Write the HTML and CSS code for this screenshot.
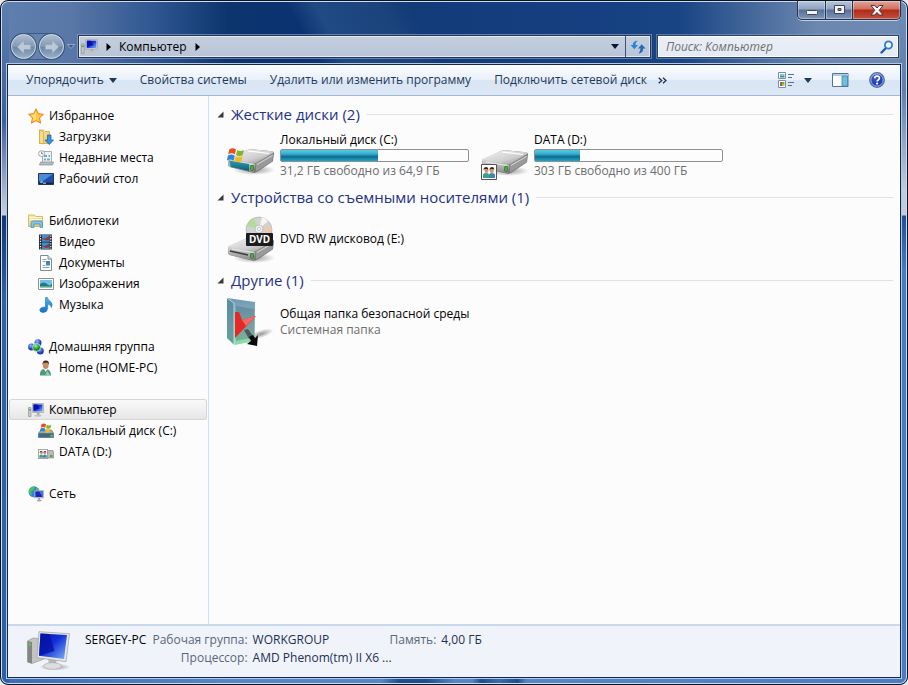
FILE: index.html
```html
<!DOCTYPE html>
<html lang="ru">
<head>
<meta charset="utf-8">
<title>Компьютер</title>
<link rel="stylesheet" href="styles.css">
</head>
<body>
<svg class="defs" aria-hidden="true">
  <defs>
    <linearGradient id="screen" x1="0" y1="0" x2="1" y2="1"><stop offset="0" stop-color="#0717b8"/><stop offset=".45" stop-color="#1230d8"/><stop offset="1" stop-color="#7fb4f4"/></linearGradient>
    <linearGradient id="metal" x1="0" y1="0" x2="1" y2="1"><stop offset="0" stop-color="#f4f4f4"/><stop offset=".6" stop-color="#cfcfcf"/><stop offset="1" stop-color="#8c8c8c"/></linearGradient>
    <linearGradient id="front" x1="0" y1="0" x2="0" y2="1"><stop offset="0" stop-color="#d8d8d8"/><stop offset="1" stop-color="#8a8a8a"/></linearGradient>
    <linearGradient id="teal" x1="0" y1="0" x2="0" y2="1"><stop offset="0" stop-color="#2aa0b4"/><stop offset="1" stop-color="#0e5a74"/></linearGradient>
    <linearGradient id="folder" x1="0" y1="0" x2="1" y2="1"><stop offset="0" stop-color="#fdf0b8"/><stop offset="1" stop-color="#e2bf55"/></linearGradient>
    <linearGradient id="note" x1="0" y1="0" x2="0" y2="1"><stop offset="0" stop-color="#4fb4ee"/><stop offset="1" stop-color="#1270c4"/></linearGradient>
    <linearGradient id="glassfolder" x1="0" y1="0" x2="0" y2="1"><stop offset="0" stop-color="#5f8fb0"/><stop offset=".6" stop-color="#8fb4b8"/><stop offset="1" stop-color="#7fdc9c"/></linearGradient>
    <radialGradient id="blueball" cx=".4" cy=".3"><stop offset="0" stop-color="#9fb6ff"/><stop offset="1" stop-color="#1b3bbd"/></radialGradient>
    <radialGradient id="greenball" cx=".4" cy=".3"><stop offset="0" stop-color="#9fef9f"/><stop offset="1" stop-color="#0f8a1f"/></radialGradient>
    <radialGradient id="shade"><stop offset="0" stop-color="#000" stop-opacity=".4"/><stop offset="1" stop-color="#000" stop-opacity="0"/></radialGradient>
    <symbol id="flag" viewBox="0 0 16 16">
      <path d="M2 3q3-2 6 0L7 7.500q-3-2-6 0z" fill="#e8501c"/><path d="M9 3.500q3 2 6 0L14 8q-3 2-6 0z" fill="#7cb82a"/>
      <path d="M.8 8.600q3-2 6 0L5.800 13q-3-2-6 0z" fill="#2a86dc"/><path d="M7.800 9q3 2 6 0l-1 4.500q-3 2-6 0z" fill="#f8b818"/>
    </symbol>
    <symbol id="pc" viewBox="0 0 16 16">
      <path d="M.5 5.500h2.500v9H.5z" fill="#c9c9c9" stroke="#8a8a8a" stroke-width=".6"/><path d="M.8 7h1.800v1.500H.8z" fill="#3cb62c"/>
      <path d="M4.500 1.500h11v9h-11z" fill="#dadada" stroke="#999" stroke-width=".6"/><path d="M5.500 2.500h9v7h-9z" fill="url(#screen)"/><path d="M5.500 2.500h4l2 4-6 2z" fill="#0612b0"/>
      <path d="M9 10.500h2.500v2.500H9z" fill="#aaa"/><ellipse cx="10" cy="13.600" rx="3.600" ry="1.200" fill="#c4c4c4"/>
    </symbol>
    <symbol id="drive" viewBox="0 0 48 30">
      <ellipse cx="27" cy="24" rx="21" ry="5" fill="url(#shade)"/>
      <path d="M1 13 20 4q2-1 5-.8l20 2q2 .3 2 2l-1 8L30 26q-2 1-4 .7L3 21q-2-.5-2-3z" fill="#777"/>
      <path d="M1 12 20 4q2-1 5-.8l20 2q2 .3 1 1.800L30 16.500q-1.500 1-4 .5L2 14z" fill="url(#metal)"/>
      <path d="M1 12.500 27 17.200q1 .2 1 1.500l-1 6q-.3 1.800-2 1.400L4 21.500Q1.400 21 1.300 18z" fill="url(#front)"/>
      <path d="M28.500 17.500 46.300 7.500 45.500 15 29 25.500z" fill="#999"/><path d="M30 18.500 45.500 9.500" stroke="#d8d8d8"/>
      <path d="M5 15 26 18.500" stroke="#f2f2f2" stroke-width=".8"/><rect x="23.500" y="19" width="3" height="5.500" rx="1" fill="#17420f"/><path d="M25 19.500v4.500" stroke="#43f03a" stroke-width="1.400"/>
      <path d="M21 5 42 7.500" stroke="#fff" stroke-width="1.200"/>
    </symbol>
    <symbol id="people" viewBox="0 0 16 16">
      <path d="M.5.500h15v15H.5z" fill="#fcfcfc" stroke="#555"/>
      <path d="M2 14v-3q0-2 3-2t3 2v3z" fill="#3f9f84"/><path d="M8 14v-3q0-2 3-2t3 2v3z" fill="#3f86b8"/><ellipse cx="5.500" cy="6.500" rx="2" ry="2.600" fill="#d09a70"/><ellipse cx="10.800" cy="6.500" rx="2" ry="2.600" fill="#d09a70"/><path d="M2.500 6q0-3 2.800-3 2.200.2 2 2.500-2-1-3.300-.4zM8.500 6q0-3 2.800-3 2.200.2 2 2.500-2-1-3.300-.4z" fill="#3c2418"/>
    </symbol>
  </defs>
</svg>

<div class="window">
  <header class="titlebar">
    <div class="caption">
      <button class="cap min" aria-label="Свернуть"><svg width="14" height="8"><rect x="1.500" y="2.500" width="11" height="4" rx="1" fill="#f4f4f4" stroke="#3c4658"/></svg></button>
      <button class="cap max" aria-label="Развернуть"><svg width="13" height="10"><path d="M1.500.500h10v8h-10zM5 3.500h3v2H5z" fill="#f4f4f4" fill-rule="evenodd" stroke="#3c4658"/></svg></button>
      <button class="cap close" aria-label="Закрыть"><svg width="14" height="11"><path d="M1 .500h3.800L7 3l2.200-2.500H13L9.200 5.300 13 10H9.200L7 7.500 4.800 10H1l3.800-4.700z" fill="#f6f6f6" stroke="#54303a"/></svg></button>
    </div>
    <div class="navrow">
      <div class="history">
        <button class="round" aria-label="Назад"><svg width="18" height="18" viewBox="0 0 16 16"><path d="M8 2 2 8l6 6v-3.800h6V5.800H8z" fill="#bccad8" stroke="#8fa2b8" stroke-width=".6"/></svg></button>
        <button class="round" aria-label="Вперед"><svg width="18" height="18" viewBox="0 0 16 16"><path d="m8 2 6 6-6 6v-3.800H2V5.800h6z" fill="#bccad8" stroke="#8fa2b8" stroke-width=".6"/></svg></button>
      </div>
      <button class="recent" aria-label="Последние страницы"><svg width="8" height="5"><path d="M.5.500h7L4 4.500z" fill="#3c5a8c" stroke="#a4b8d4" stroke-width=".8"/></svg></button>
      <div class="address">
        <svg class="pcicon" width="17" height="17"><use href="#pc"/></svg>
        <svg class="tri" width="5" height="8"><path d="M.5 0v8L5 4z"/></svg>
        <a class="crumb" href="#">Компьютер</a>
        <svg class="tri" width="5" height="8"><path d="M.5 0v8L5 4z"/></svg>
        <button class="drop" aria-label="Предыдущие расположения"><svg width="8" height="5"><path d="M0 0h8L4 5z" fill="#0a1434"/></svg></button>
        <button class="refresh" aria-label="Обновить"><svg width="16" height="14"><path d="M7.500.500Q2.800 1 2.800 5H.5l3.800 4.200L8 5H5.500Q5.500 2.500 7.500.500z" fill="#2a86d8"/><path d="M8.500 13.500q4.700-.5 4.700-5h2.300L11.700 4.300 8 8.500h2.500q0 3-2 5z" fill="#2868b8"/></svg></button>
      </div>
      <label class="search">
        <input type="search" aria-label="Поиск" placeholder="Поиск: Компьютер">
        <svg width="14" height="14"><path d="M6 8 1.500 12.500" stroke="#1f5aa4" stroke-width="2.400" stroke-linecap="round"/><circle cx="8.500" cy="5" r="3.600" fill="#eef6fc" stroke="#2f7bc4" stroke-width="1.800"/></svg>
      </label>
    </div>
  </header>

  <div class="client">
    <div class="toolbar">
      <button class="cmd">Упорядочить <svg width="8" height="5"><path d="M0 0h8L4 5z" fill="#1e395b"/></svg></button>
      <button class="cmd">Свойства системы</button>
      <button class="cmd">Удалить или изменить программу</button>
      <button class="cmd">Подключить сетевой диск</button>
      <button class="more" aria-label="Дополнительно"><svg width="9" height="7"><path d="m.7.700 3 2.800-3 2.800M5 .700l3 2.800-3 2.800" fill="none" stroke="#1e2f52" stroke-width="1.300"/></svg></button>
      <div class="tools">
        <button class="tool view" aria-label="Изменить представление"><svg width="17" height="16"><path d="M.5.500h7v6h-7zM.5 8.500h7v7h-7z" fill="#fff" stroke="#7c8ca4"/><path d="M2 2h4.500v2H2z" fill="#7fc0ea"/><path d="M2 4h4.500v1.500H2z" fill="#2b9a70"/><path d="M2 10h2v2H2z" fill="#e44a24"/><path d="M4 10h2.500v2H4z" fill="#65b52b"/><path d="M2 12h2v2H2z" fill="#2e77d0"/><path d="M4 12h2.500v2H4z" fill="#f0b020"/><path d="M10 2.500h6M10 5.500h4M10 10.500h6M10 13.500h4" stroke="#5b6f90"/></svg><svg width="8" height="5"><path d="M0 0h8L4 5z" fill="#1e395b"/></svg></button>
        <button class="tool" aria-label="Область просмотра"><svg width="17" height="14"><path d="M.5.500h15.500v13H.5z" fill="#fff" stroke="#52749a"/><path d="M1 1h15v2H1z" fill="#b4cadd"/><path d="M10 3h5.500v10H10z" fill="#6cc0dc" stroke="#3f86a8" stroke-width=".8"/></svg></button>
        <button class="tool help" aria-label="Справка"><svg width="16" height="16"><circle cx="8" cy="8" r="7.300" fill="url(#blueball)" stroke="#566a94" stroke-width="1.200"/><circle cx="8" cy="8" r="6.200" fill="#1d42b4" fill-opacity=".75" stroke="#cdd8ee" stroke-width=".8"/><path d="M5.600 6.400Q5.700 4 8.100 4q2.300.1 2.300 2 0 1.200-1.200 1.900-1 .6-1 1.500" fill="none" stroke="#fff" stroke-width="1.700"/><circle cx="8.100" cy="11.600" r="1.100" fill="#fff"/></svg></button>
      </div>
    </div>

    <div class="body">
      <nav class="sidebar">
        <ul>
          <li><a href="#"><svg viewBox="0 0 16 16"><path d="m8 .800 2.200 4.900 5.200.6-3.900 3.600 1.100 5.300L8 12.600l-4.600 2.600 1.100-5.300L.6 6.300l5.200-.6z" fill="#ffc83c" stroke="#ee7c18"/><path d="M8 3v8.500L4.500 13l1-3.800L3 7l3.500-.5z" fill="#fff0a0" opacity=".6"/></svg>Избранное</a></li>
          <li class="sub"><a href="#"><svg viewBox="0 0 16 16"><path d="M1.500 1h4L7 2.500h4.500v12h-10z" fill="url(#folder)" stroke="#c89f3c" stroke-width=".7"/><path d="m1.500 1 4 2v12l-4-1z" fill="#f9dd86" stroke="#c89f3c" stroke-width=".6"/><path d="M9.500 6h3.500v5h2.500l-4.200 4.600L7 11h2.500z" fill="#2f95e4" stroke="#145ca8" stroke-width=".7"/></svg>Загрузки</a></li>
          <li class="sub"><a href="#"><svg viewBox="0 0 16 16"><path d="M4.500 1.500h9v11h-9z" fill="#eef3f6" stroke="#8d9aa2" stroke-width=".8"/><path d="M6 5h3v2H6zM10.500 5H12v2h-1.500zM6 8.500h2v2H6zM9 8.500h3v2H9z" fill="#74a9c8"/><path d="M2.500 12h13l-1 3H1.500z" fill="#b8bcc0" stroke="#7c8288" stroke-width=".6"/><circle cx="3.600" cy="3.600" r="3" fill="#fafafa" stroke="#8b939a" stroke-width=".8"/><path d="M3.600 1.800v2h1.600" fill="none" stroke="#555" stroke-width=".7"/></svg>Недавние места</a></li>
          <li class="sub"><a href="#"><svg viewBox="0 0 16 16"><path d="M.5 2.500h15v11H.5z" fill="#1c4fae" stroke="#27364e"/><path d="M1 3h14L5 10H1z" fill="#4c8ad8"/><path d="M1 11.500h14V13H1z" fill="#17263e"/><circle cx="3.500" cy="11" r="1.300" fill="#49d0d8"/><path d="M5 12.200h3" stroke="#fff" stroke-width=".8"/></svg>Рабочий стол</a></li>
        </ul>
        <ul>
          <li><a href="#"><svg viewBox="0 0 16 16"><path d="M.5 2h6l1.500 1.500h6.500v10H.5z" fill="url(#folder)" stroke="#cba548" stroke-width=".7"/><path d="M2 4.500h12M2 6.500h12" stroke="#fff7d0"/><path d="M3 14.500V10q0-2 2-2h7.500q2 0 2 2v4.500H12V11H6v3.500z" fill="#7ec4ea" stroke="#3e8cc0" stroke-width=".7"/></svg>Библиотеки</a></li>
          <li class="sub"><a href="#"><svg viewBox="0 0 16 16"><path d="M1 .500h13v15H1z" fill="#22262c"/><path d="M4 1h7.500v6.700H4zM4 8.500h7.500V15H4z" fill="#3d8fd4"/><path d="M11.500 2v3.500L8 6.500 4 4.800V4l3 .5zM11.500 9.500V13L8 14l-4-1.700v-.8l3 .5z" fill="#8d3a2c"/><path d="M2.500 1.500v14M12.800 1.500v14" stroke="#f2f2f2" stroke-width="1.300" stroke-dasharray="1.300 1.300"/></svg>Видео</a></li>
          <li class="sub"><a href="#"><svg viewBox="0 0 16 16"><path d="M2.500.500H10l3.500 3.500v11.500h-11z" fill="#fdfdfd" stroke="#848c96"/><path d="M10 .500v3.500h3.500" fill="#dbe2ea" stroke="#848c96"/><path d="M4.500 4.500h4M4.500 6.500h3M4.500 12.500h7M4.500 10.500h3" stroke="#8fa0b2"/><path d="M8 6h4v4.500H8z" fill="#3f84c4"/></svg>Документы</a></li>
          <li class="sub"><a href="#"><svg viewBox="0 0 16 16"><path d="M.5 2.500h15v11H.5z" fill="#fff" stroke="#8a9298"/><path d="M2 4h12v8H2z" fill="#70c0e8"/><path d="M2 8q4-3 7 0t5-.5V12H2z" fill="#1f7884"/><path d="M2 10.500h12V12H2z" fill="#8cd0a8"/></svg>Изображения</a></li>
          <li class="sub"><a href="#"><svg viewBox="0 0 16 16"><path d="M7.500.500h1.800q.5 2.200 3.200 4 2.700 2.200 1 6Q13 7.800 9.600 7v4.500Q9.300 15.300 5 15.500 1.500 15.300 1.800 12.500 2.800 9.500 7.500 10z" fill="url(#note)" stroke="#1a78c8" stroke-width=".6"/></svg>Музыка</a></li>
        </ul>
        <ul>
          <li><a href="#"><svg viewBox="0 0 16 16"><circle cx="10" cy="3.800" r="3.500" fill="url(#blueball)"/><circle cx="3.500" cy="8" r="3.400" fill="url(#blueball)"/><circle cx="12.300" cy="12" r="3.500" fill="url(#blueball)"/><circle cx="8.500" cy="8.400" r="4" fill="url(#greenball)" stroke="#e4f4ff" stroke-width=".7"/></svg>Домашняя группа</a></li>
          <li class="sub"><a href="#"><svg viewBox="0 0 16 16"><path d="M2 15.500q-.5-6 4-6.500h2.500q4.500.8 4.500 6.500z" fill="#4f9a7c"/><path d="m6 9 1.700 3L9.500 9z" fill="#fff"/><path d="M9.500 11 12 15.500H7z" fill="#8fd0b8"/><ellipse cx="7.700" cy="5" rx="2.900" ry="3.900" fill="#c98c62"/><path d="M4.500 5Q4 .500 7.800.400 11.600.500 11 5q-.4-2-2-2.400-2.500.6-3.500-.1Q5 3.500 4.500 5z" fill="#3a2a22"/></svg>Home (HOME-PC)</a></li>
        </ul>
        <ul>
          <li class="selected"><a href="#"><svg viewBox="0 0 16 16"><use href="#pc"/></svg>Компьютер</a></li>
          <li class="sub"><a href="#"><svg viewBox="0 0 16 16"><path d="M.5 10 3 7h10.500l2 3v4.500H.5z" fill="#9fa8ac" stroke="#687074" stroke-width=".6"/><path d="M.5 10.200h15v4.300H.5z" fill="#3f6c84"/><path d="M12.500 12h2v1.500h-2z" fill="#46f03c"/><use href="#flag" x="2" y="-1" width="12" height="12"/></svg>Локальный диск (C:)</a></li>
          <li class="sub"><a href="#"><svg viewBox="0 0 16 16"><path d="M6 6.500h9l.7 3v4.500H6z" fill="#b9b9b9" stroke="#777" stroke-width=".6"/><path d="M12 11h2.500v2H12z" fill="#3fae35"/><use href="#people" x="0" y="5" width="10" height="10"/></svg>DATA (D:)</a></li>
        </ul>
        <ul>
          <li><a href="#"><svg viewBox="0 0 16 16"><circle cx="6" cy="5.800" r="5.500" fill="#2d86dc"/><path d="M1.500 3Q4 0 7 1L5.500 4 3 5.500l1 3L2.500 9Q0 6 1.500 3zM8 2l2.500.5L11 5H8z" fill="#48c84a"/><path d="M6.500 4.500h9v7.500h-9z" fill="#ccc" stroke="#909090" stroke-width=".5"/><path d="M7.300 5.300h7.400V11H7.300z" fill="#1428c4"/><path d="M11 5.300h3.700V11z" fill="#4a78e8"/><path d="M10.300 12h1.600v2h-1.600z" fill="#999"/><ellipse cx="11.200" cy="14.600" rx="2.600" ry="1" fill="#aaa"/></svg>Сеть</a></li>
        </ul>
      </nav>

      <main class="content">
        <section>
          <h2><svg width="7" height="7"><path d="M6.500.500v6h-6z" fill="#3a3a3a"/></svg><span>Жесткие диски (2)</span></h2>
          <div class="tiles">
            <div class="tile">
              <svg class="big" viewBox="0 0 48 48"><use href="#drive" x="0" y="14" width="48" height="30"/><path d="m2 28.500 20 3.500v7L4 35z" fill="url(#teal)"/><use href="#flag" x="0" y="14" width="18" height="18"/></svg>
              <div class="info"><span class="name">Локальный диск (C:)</span><div class="meter" role="img" aria-label="Занято 52%"><i style="width:52%"></i></div><span class="note">31,2 ГБ свободно из 64,9 ГБ</span></div>
            </div>
            <div class="tile">
              <svg class="big" viewBox="0 0 48 48"><use href="#drive" x="0" y="15" width="48" height="30"/><use href="#people" x="0" y="32" width="16" height="16"/></svg>
              <div class="info"><span class="name">DATA (D:)</span><div class="meter" role="img" aria-label="Занято 24%"><i style="width:24%"></i></div><span class="note">303 ГБ свободно из 400 ГБ</span></div>
            </div>
          </div>
        </section>
        <section>
          <h2><svg width="7" height="7"><path d="M6.500.500v6h-6z" fill="#3a3a3a"/></svg><span>Устройства со съемными носителями (1)</span></h2>
          <div class="tiles">
            <div class="tile">
              <svg class="big" viewBox="0 0 48 48"><use href="#drive" x="0" y="19" width="48" height="30"/><path d="m3 36 18 4" stroke="#3c3c3c" stroke-width="1.600"/><circle cx="32" cy="15" r="13" fill="#d2d2d2" stroke="#aaa" stroke-width=".6"/><path d="m32 14-12.500-3Q21 5 26 3z" fill="#a4e088" opacity=".7"/><path d="m32 14 12 4q1-4 .5-7z" fill="#f4c8a0" opacity=".8"/><path d="m32 14 3-12q4 1 6 4z" fill="#f4f4f4"/><circle cx="32" cy="14" r="4" fill="#efefef" stroke="#a8a8a8" stroke-width=".6"/><circle cx="32" cy="14" r="1.600" fill="#fff" stroke="#999" stroke-width=".5"/><rect x="19" y="18" width="27" height="13" rx="1" fill="#1c1c1c"/><text x="32.500" y="28" class="dvd">DVD</text></svg>
              <div class="info"><span class="name">DVD RW дисковод (E:)</span></div>
            </div>
          </div>
        </section>
        <section>
          <h2><svg width="7" height="7"><path d="M6.500.500v6h-6z" fill="#3a3a3a"/></svg><span>Другие (1)</span></h2>
          <div class="tiles">
            <div class="tile">
              <svg class="big" viewBox="0 0 48 48"><ellipse cx="34" cy="36" rx="13" ry="4" fill="url(#shade)" transform="rotate(-18 34 36)"/><path d="M0 0 28 4v39L8 47 0 40z" fill="url(#glassfolder)" opacity=".9"/><path d="m0 0 7 5v42l-7-7z" fill="#4c8494" opacity=".65"/><path d="m0 0 7 5v42" fill="none" stroke="#c8e8ec" stroke-width=".8"/><path d="m9 8 18 3v28L9 43z" fill="#365c68" opacity=".3"/><path d="M8 14h4l3 8 14-4L8 40z" fill="#e52a26"/><path d="m15 22 14-4-10 10z" fill="#f46a60"/><path d="m17 32 4-1 5 7-4 3z" fill="#4d5a5c"/><path d="m22 39 4-2 2 3 3-3-1 11-10-2 4-3z" fill="#080808"/></svg>
              <div class="info"><span class="name">Общая папка безопасной среды</span><span class="note">Системная папка</span></div>
            </div>
          </div>
        </section>
      </main>
    </div>

    <footer class="details">
      <svg class="host" viewBox="0 0 44 40"><ellipse cx="28" cy="36" rx="16" ry="3.500" fill="url(#shade)"/><path d="M.5 10 6 7l11 1v20L5 32.500.5 31z" fill="#c4c4c4" stroke="#8c8c8c" stroke-width=".6"/><path d="M.5 10 5 11v21.500L.5 31z" fill="#858585"/><path d="M1.500 12h2v3h-2z" fill="#45d235"/><path d="m21 27 8 1 1 6h-8z" fill="#b9b9b9"/><ellipse cx="25.500" cy="35" rx="9" ry="3.300" fill="#dedede" stroke="#a4a4a4" stroke-width=".6"/><path d="m12 .700 30.500 2-3.500 28-29-4z" fill="#e6e6e6" stroke="#9f9f9f" stroke-width=".7"/><path d="m13.500 2.500 26.500 1.600-3 24-25-3.400z" fill="url(#screen)"/><path d="m13.500 2.500 9 .5 5 17-15.500 4.700z" fill="#0510a0" opacity=".75"/></svg>
      <strong class="hostname">SERGEY-PC</strong>
      <dl class="facts">
        <dt>Рабочая группа:</dt><dd>WORKGROUP</dd><dt>Память:</dt><dd>4,00 ГБ</dd>
        <dt>Процессор:</dt><dd>AMD Phenom(tm) II X6 ...</dd>
      </dl>
    </footer>
  </div>
</div>
</body>
</html>
```
FILE: styles.css
```css
* { box-sizing: border-box; }
body { margin: 0; background: #e8eaee; font: 12px/16px "Open Sans", "Noto Sans", sans-serif; color: #000; }
button { padding: 0; border: 0; background: none; font: inherit; color: inherit; }
a { color: inherit; text-decoration: none; }
ul, dl, dd { margin: 0; padding: 0; list-style: none; }
svg { display: block; flex: none; }
.defs { position: absolute; width: 0; height: 0; }

.window {
  display: flex; flex-direction: column; min-height: 100vh; padding: 0 6px 6px;
  border: 1px solid #081428; border-radius: 8px;
  box-shadow: inset 0 0 0 1px #cfdcec;
  background:
    linear-gradient(180deg, #6f8cb4 0, #5f80ae 90px, #c3cbdc 190px, #c3cbdc 214px, #1f4f98 215px, #4a7cc4 270px, #4a7cc4 100%) right / 8px 100% no-repeat,
    linear-gradient(180deg, #5f80ae 0, #3f5f98 120px, #b8c0d4 200px, #c8cede 214px, #123878 215px, #2f62a8 300px, #2c60a8 100%) left / 8px 100% no-repeat,
    linear-gradient(90deg, #3a6cb4 0, #5487c8 25%, #5487c8 42%, #1f4d8e 44%, #1f4d8e 47%, #5487c8 50%, #5487c8 52%, #1f4d8e 53%, #3a6cb0 55%, #1f4d8e 57%, #5487c8 58%, #4a7cc4 100%) bottom / 100% 8px no-repeat,
    linear-gradient(60deg, transparent 34%, #1f4a84 37%, #1b437c 44%, transparent 47%) top / 100% 66px no-repeat,
    linear-gradient(90deg, #5f80ae 0, #5876a6 8%, #335a94 16%, #0c356e 25%, #0a3270 33%, #123c78 45%, #153f80 65%, #194584 75%, #6c87b0 90%, #6f8cb4 100%);
}
.caption { display: flex; justify-content: flex-end; height: 34px; }
.cap {
  display: flex; align-items: center; justify-content: center; height: 19px; width: 27px;
  border: 1px solid #26354f; border-top: 0; border-left-width: 0;
  background: linear-gradient(#b8c6da 0, #8ea2c0 45%, #56709a 50%, #8096b8 100%);
  box-shadow: inset 0 0 0 1px rgba(255,255,255,.35), 0 1px 0 rgba(255,255,255,.6);
}
.cap.min { width: 29px; border-left-width: 1px; border-bottom-left-radius: 5px; padding-top: 4px; }
.cap.close { width: 48px; border-bottom-right-radius: 5px; background: linear-gradient(#e2a598 0, #cf6f5e 45%, #b02a18 50%, #c4503a 100%); }

.navrow { display: flex; align-items: center; height: 23px; margin-bottom: 6px; padding: 0 2px 0 4px; }
.history { display: flex; gap: 3px; border-radius: 13px; background: rgba(110,140,180,.5); box-shadow: 0 0 0 1px rgba(20,40,80,.4); }
.round {
  display: flex; align-items: center; justify-content: center; width: 25px; height: 25px;
  border: 1px solid #d0dae6; border-radius: 50%;
  background: linear-gradient(#aebed0 0, #8298b4 50%, #6a84a6 51%, #9ab0c8 100%); box-shadow: 0 0 0 1px #40577c;
}
.recent { width: 14px; height: 20px; display: flex; align-items: center; justify-content: center; }
.address {
  flex: 1; min-width: 0; display: flex; align-items: center; height: 23px; padding-left: 2px;
  background: linear-gradient(#c4cedd, #b9c5d8); border: 1px solid #24375a; box-shadow: inset 0 0 0 1px #e4eaf2, 0 0 0 1px rgba(150,170,205,.6);
}
.tri { margin: 0 8px; }
.crumb { line-height: 21px; }
.drop { width: 20px; height: 21px; margin-left: auto; display: flex; align-items: center; justify-content: center; }
.refresh { width: 25px; height: 21px; border-left: 1px solid #3c5078; display: flex; align-items: center; justify-content: center; }
.search {
  width: 242px; display: flex; align-items: center; height: 23px; margin-left: 6px; padding: 0 4px 0 8px;
  background: linear-gradient(#eaeff6, #e4eaf3); border: 1px solid #2c4068; box-shadow: inset 0 0 0 1px #fff, 0 0 0 1px rgba(150,170,205,.5);
}
.search input { flex: 1; min-width: 0; padding: 0; border: 0; outline: 0; background: none; font: inherit; font-style: italic; }
.search input::placeholder { color: #6f6f74; opacity: 1; }

.client {
  flex: 1; display: flex; flex-direction: column; border: 1px solid #16294a; box-shadow: 0 0 0 1px #b4c8e2; background: #fcfcfc;
}
.toolbar {
  display: flex; align-items: center; height: 31px; padding: 0 15px 0 18px; color: #1e395b;
  background: linear-gradient(#fbfdff 0, #eaf1fb 48%, #dae5f3 52%, #dde8f6 100%); border-bottom: 1px solid #a4b8d4;
}
.cmd { display: flex; align-items: center; gap: 5px; margin-right: 23px; white-space: nowrap; }
.more { margin-left: -12px; }
.tools { display: flex; align-items: center; gap: 20px; margin-left: auto; }
.tool { display: flex; align-items: center; }
.view { gap: 9px; }

.body { flex: 1; display: flex; }
.sidebar { width: 201px; flex: none; padding: 9px 1px 0; border-right: 1px solid #d4e0f2; }
.sidebar ul { margin-bottom: 21px; }
.sidebar a { display: flex; align-items: center; gap: 5px; height: 21px; padding-left: 19px; white-space: nowrap; }
.sidebar .sub a { padding-left: 29px; }
.sidebar svg { width: 16px; height: 16px; }
.selected { border-radius: 3px; background: linear-gradient(#fafafa, #e6e6e6); box-shadow: inset 0 0 0 1px #d6d6d6; }

.content { flex: 1; min-width: 0; padding: 6px 7px 0 8px; }
h2 { display: flex; align-items: center; gap: 7px; height: 24px; margin: 0; font-size: 15px; font-weight: 400; line-height: 24px; color: #1e3287; white-space: nowrap; }
h2::after { content: ""; flex: 1; height: 1px; background: #dfe1e5; }
.tiles { display: flex; flex-wrap: wrap; padding-left: 10px; }
.tile { display: flex; align-items: center; gap: 5px; width: 254px; height: 59px; white-space: nowrap; }
.big { width: 48px; height: 48px; }
.info { display: flex; flex-direction: column; }
.note { color: #6d6d6d; }
.meter { width: 189px; height: 13px; margin: 1px 0; border: 1px solid #8e9094; border-radius: 2px; background: #fdfdfd; }
.meter i { display: block; height: 100%; background: linear-gradient(#58c8e0 0, #38b0d0 35%, #0e6c90 60%, #1ea8c8 100%); }
.dvd { font: bold 10px "Noto Sans", sans-serif; fill: #fff; text-anchor: middle; }

.details {
  display: flex; height: 53px; padding: 5px 19px 0; border-top: 2px solid #cad8ec; background: #f0f4fa;
}
.host { width: 44px; height: 40px; }
.hostname { margin-left: 14px; font-weight: 400; line-height: 18px; }
.facts { display: grid; grid-template-columns: auto 132px auto auto; align-content: start; column-gap: 5px; margin-left: 6px; line-height: 18px; white-space: nowrap; color: #1e2f52; }
.facts dt { text-align: right; color: #5a6779; }
```
